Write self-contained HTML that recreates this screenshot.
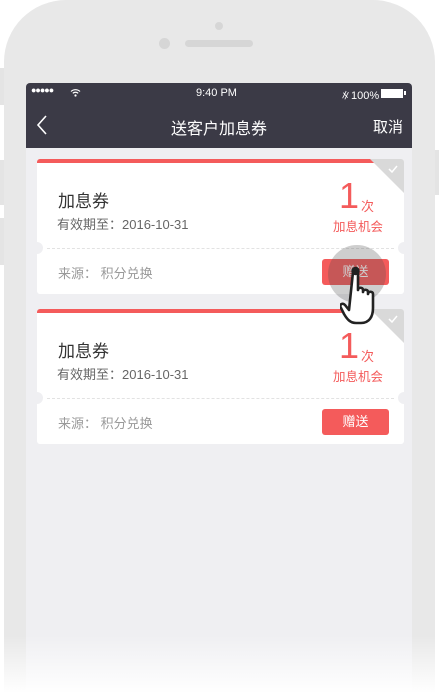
<!DOCTYPE html>
<html><head><meta charset="utf-8"><style>
*{margin:0;padding:0;box-sizing:border-box}
html{width:439px;height:700px;overflow:hidden}
body{width:439px;height:700px;overflow:hidden;background:#fff;position:relative;font-family:"Liberation Sans","Noto Sans CJK SC",sans-serif}
.phone{position:absolute;left:4px;top:0;width:431px;height:700px;background:#e8e8e8;border-radius:62px 62px 0 0}
.btn{position:absolute;background:#e4e4e4}
.screen{position:absolute;left:26px;top:83px;width:386px;height:617px;background:#efeff2;border-radius:4px 4px 0 0;overflow:hidden}
.status{height:20px;background:#3b3a46;color:#fff;font-size:11px;position:relative}
.nav{height:45px;background:#3b3a46;color:#fff;position:relative}
.card{position:absolute;left:11px;width:367px;height:135px;background:#fff;border-radius:3px;overflow:hidden}
.bar{position:absolute;left:0;top:0;width:340px;height:4px;background:#f45b5b}
.tri{position:absolute;right:0;top:0;width:0;height:0;border-top:34px solid #d9d9d9;border-left:34px solid transparent}
.t1{position:absolute;left:21px;top:28px;font-size:17px;color:#333}
.t2{position:absolute;left:20px;top:55px;font-size:13px;color:#666}
.num{position:absolute;left:302px;top:16px;font-size:36px;line-height:41px;color:#f45b5b}
.ci{position:absolute;left:324px;top:37px;font-size:13px;color:#f45b5b}
.jx{position:absolute;left:296px;top:57px;font-size:12.5px;color:#f45b5b}
.dash{position:absolute;left:10px;right:10px;top:89px;border-top:1px dashed #e2e2e2}
.hole{position:absolute;top:83px;width:12px;height:12px;border-radius:50%;background:#efeff2}
.src{position:absolute;left:21px;top:104px;font-size:13px;color:#999}
.give{position:absolute;right:15px;top:100px;width:67px;height:26px;background:#f45b5b;color:#fff;font-size:13px;border-radius:3px;text-align:center;line-height:26px}
.fade{position:absolute;left:0;top:635px;width:439px;height:65px;background:linear-gradient(rgba(255,255,255,0),#fff 90%)}
</style></head><body>
<div class="phone"></div>
<div class="btn" style="left:0;top:68px;width:4px;height:37px"></div>
<div class="btn" style="left:0;top:160px;width:4px;height:45px"></div>
<div class="btn" style="left:0;top:218px;width:4px;height:47px"></div>
<div class="btn" style="left:435px;top:150px;width:4px;height:45px"></div>
<div style="position:absolute;left:215px;top:22px;width:8px;height:8px;border-radius:50%;background:#d6d6d6"></div>
<div style="position:absolute;left:159px;top:38px;width:11px;height:11px;border-radius:50%;background:#d6d6d6"></div>
<div style="position:absolute;left:185px;top:40px;width:68px;height:7px;border-radius:4px;background:#d6d6d6"></div>
<div class="screen">
 <div class="status">
  <span style="position:absolute;left:5px;top:2px;font-size:9px;letter-spacing:-1px">●●●●●</span>
  <svg style="position:absolute;left:44px;top:5px" width="11" height="9" viewBox="0 0 11 9"><path d="M1 3.5a6.5 6.5 0 0 1 9 0M2.8 5.3a4 4 0 0 1 5.4 0" stroke="#fff" stroke-width="1.2" fill="none"/><circle cx="5.5" cy="7.5" r="1.1" fill="#fff"/></svg>
  <span style="position:absolute;left:170px;top:4px">9:40 PM</span>
  <span style="position:absolute;left:314px;top:4px">∦100%</span>
  <div style="position:absolute;left:355px;top:6px;width:22px;height:9px;border:1px solid #fff;background:#fff"></div>
  <div style="position:absolute;left:378px;top:8px;width:2px;height:4px;background:#fff"></div>
 </div>
 <div class="nav">
  <svg style="position:absolute;left:10px;top:12px" width="12" height="20" viewBox="0 0 12 20"><path d="M10 1L2 10l8 9" stroke="#fff" stroke-width="1.6" fill="none"/></svg>
  <div style="position:absolute;left:0;width:386px;top:12px;text-align:center;font-size:16px">送客户加息券</div>
  <div style="position:absolute;right:9px;top:13px;font-size:15px">取消</div>
 </div>
 <div class="card" style="top:76px">
  <div class="bar"></div><div class="tri"></div>
  <svg style="position:absolute;right:6px;top:6px" width="10" height="8" viewBox="0 0 10 8"><path d="M1 4l3 3 5-6" stroke="#fff" stroke-width="1.5" fill="none"/></svg>
  <div class="t1">加息券</div><div class="t2">有效期至：2016-10-31</div>
  <div class="num">1</div><div class="ci">次</div><div class="jx">加息机会</div>
  <div class="dash"></div><div class="hole" style="left:-6px"></div><div class="hole" style="right:-6px"></div>
  <div class="src">来源：&nbsp;积分兑换</div><div class="give">赠送</div>
 </div>
 <div class="card" style="top:226px">
  <div class="bar"></div><div class="tri"></div>
  <svg style="position:absolute;right:6px;top:6px" width="10" height="8" viewBox="0 0 10 8"><path d="M1 4l3 3 5-6" stroke="#fff" stroke-width="1.5" fill="none"/></svg>
  <div class="t1">加息券</div><div class="t2">有效期至：2016-10-31</div>
  <div class="num">1</div><div class="ci">次</div><div class="jx">加息机会</div>
  <div class="dash"></div><div class="hole" style="left:-6px"></div><div class="hole" style="right:-6px"></div>
  <div class="src">来源：&nbsp;积分兑换</div><div class="give">赠送</div>
 </div>
</div>
<div style="position:absolute;left:328px;top:245px;width:58px;height:58px;border-radius:50%;background:rgba(80,80,80,0.28)"></div>
<svg style="position:absolute;left:340px;top:266px" width="50" height="66" viewBox="0 0 50 66">
<path d="M13 6c0-3 5-3 5 0v18c0-3 5-3 5 0v2c0-3 5-3 5 0v2c0-3 5-3 5 0v14c0 9-4 15-12 15h-5c-6 0-9-4-12-9l-3-6c-2-3 1-6 4-3l4 5z" fill="#fff" stroke="#222" stroke-width="2.6" stroke-linejoin="round"/>
<circle cx="15.5" cy="5" r="4.2" fill="#222"/>
</svg>
<div class="fade"></div>
</body></html>
